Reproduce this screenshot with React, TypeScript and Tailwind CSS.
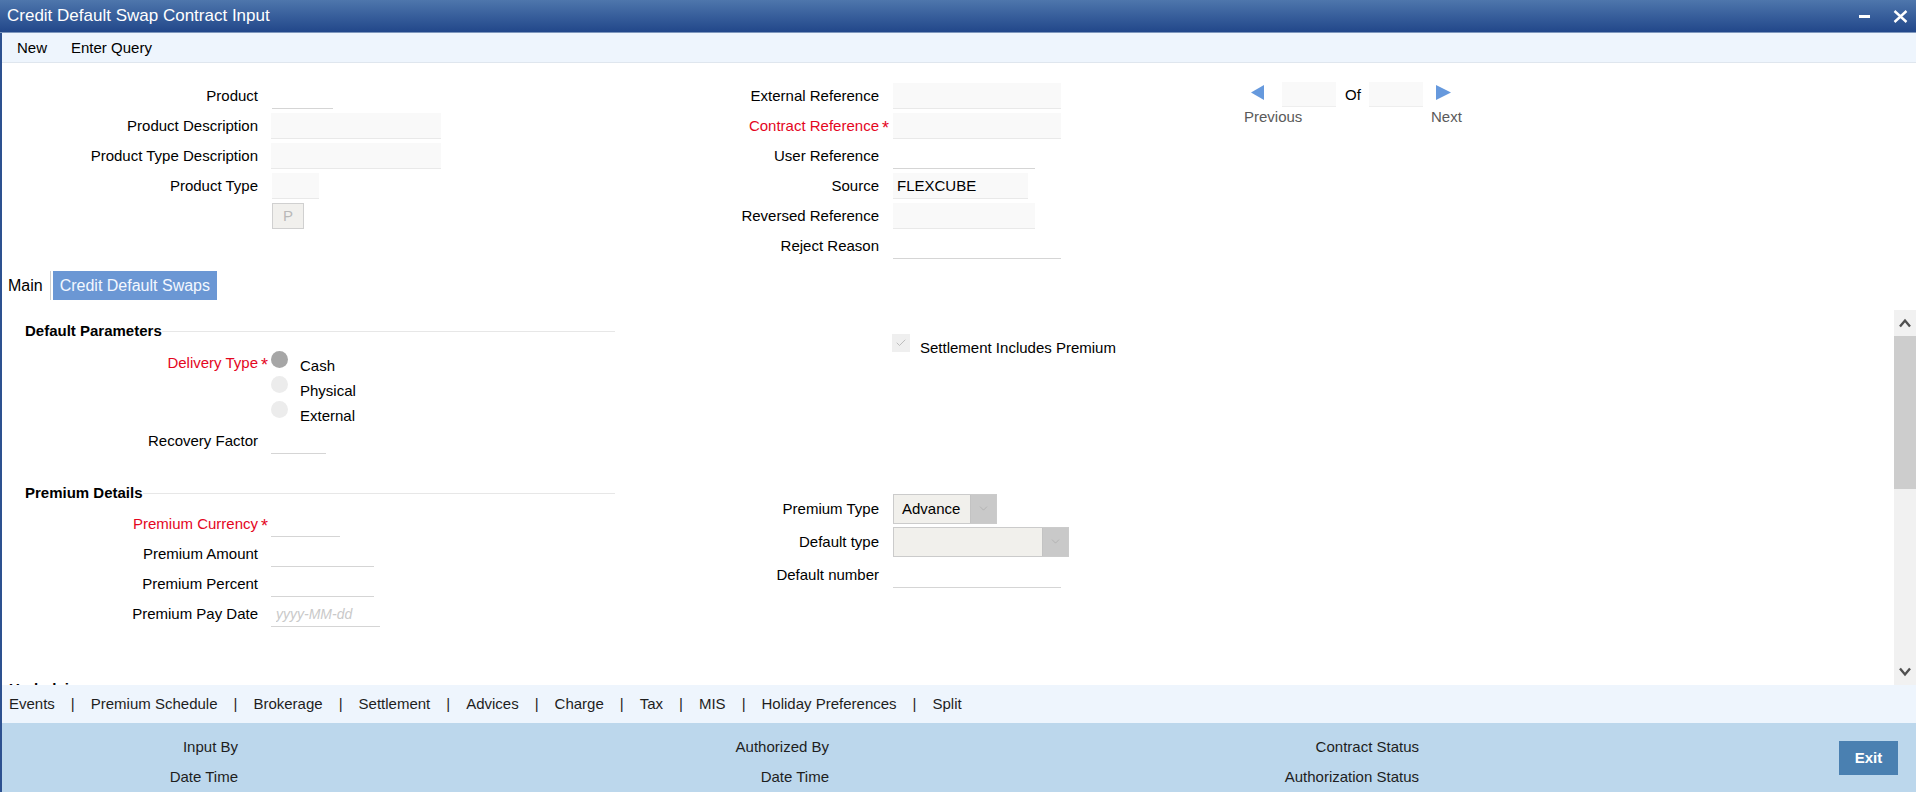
import { Fragment, type ReactNode } from "react";
import { Check, ChevronDown } from "lucide-react";

type RowProps = {
  label?: string;
  required?: boolean;
  labelClass: string;
  gapClass: string;
  heightClass?: string;
  children?: ReactNode;
};

function Row({ label, required, labelClass, gapClass, heightClass = "h-[30px]", children }: RowProps) {
  return (
    <div className={`flex items-center ${heightClass}`}>
      <span className={`${labelClass} shrink-0 text-right ${required ? "text-[#e4061e]" : "text-black"}`}>{label}</span>
      <span className={`${gapClass} shrink-0 text-[#e4061e]`}>
        {required ? <span className="inline-block pl-[3px] pt-[4px] text-[18px] leading-[18px]">*</span> : null}
      </span>
      {children}
    </div>
  );
}

function LineInput({ className, placeholder }: { className: string; placeholder?: string }) {
  return (
    <input
      readOnly
      placeholder={placeholder}
      className={`h-[26px] border-b border-[#d5d5d5] bg-transparent px-[5px] outline-none placeholder:text-[14px] placeholder:italic placeholder:text-[#c9c9c9] ${className}`}
    />
  );
}

function BoxInput({ className, value }: { className: string; value?: string }) {
  return (
    <input
      readOnly
      defaultValue={value}
      className={`h-[26px] border-b border-[#e9e9e9] bg-[#f9f9f9] px-[4px] outline-none ${className}`}
    />
  );
}

function Select({ value, widthClass }: { value?: string; widthClass: string }) {
  return (
    <div className={`flex h-[30px] ${widthClass} border border-[#cbcbcb] bg-[#f1f0ec]`}>
      <span className="flex-1 pl-[8px] leading-[28px]">{value}</span>
      <span className="flex w-[26px] items-center justify-center border-l border-[#c3c3c3] bg-[#c9c9c9]">
        <ChevronDown size={13} strokeWidth={1} color="#a0a0a0" />
      </span>
    </div>
  );
}

function SectionHeading({ title }: { title: string }) {
  return (
    <div className="flex h-[18px] items-center pl-[23px]">
      <span className="font-bold">{title}</span>
      <span className="h-px flex-1 bg-[#e7e7e7]" />
    </div>
  );
}

const L = { labelClass: "w-[256px]", gapClass: "w-[13px]" };
const R = { labelClass: "w-[264px]", gapClass: "w-[14px]" };

const links = [
  "Events",
  "Premium Schedule",
  "Brokerage",
  "Settlement",
  "Advices",
  "Charge",
  "Tax",
  "MIS",
  "Holiday Preferences",
  "Split",
];

function Navigator() {
  return (
    <div className="pl-[4px]">
      <div className="flex h-[27px] items-center pl-[7px]">
        <svg className="self-start mt-[4px]" width="13" height="15" viewBox="0 0 13 15">
          <polygon points="13,0 13,15 0,7.5" fill="#6699dd" />
        </svg>
        <input readOnly className="ml-[18px] h-[25px] w-[54px] border-b border-[#eeeeee] bg-[#f9f9f9] outline-none" />
        <span className="ml-[9px]">Of</span>
        <input readOnly className="ml-[8px] h-[25px] w-[54px] border-b border-[#eeeeee] bg-[#f9f9f9] outline-none" />
        <svg className="ml-[13px] self-start mt-[4px]" width="15" height="15" viewBox="0 0 15 15">
          <polygon points="0,0 15,7.5 0,15" fill="#6699dd" />
        </svg>
      </div>
      <div className="flex text-[#5a5a5a]">
        <span className="w-[187px]">Previous</span>
        <span>Next</span>
      </div>
    </div>
  );
}

function Radio({ label, checked }: { label: string; checked?: boolean }) {
  return (
    <div className="flex h-[25px] items-start">
      <span className={`h-[17px] w-[17px] rounded-full ${checked ? "bg-[#a6a6a6]" : "bg-[#ececec]"}`} />
      <span className="ml-[12px] mt-[6px]">{label}</span>
    </div>
  );
}

function Scrollbar() {
  return (
    <div className="flex w-[22px] shrink-0 flex-col bg-[#f1f1f1]">
      <div className="flex h-[26px] items-center justify-center">
        <svg width="12" height="10" viewBox="0 0 12 10">
          <polyline points="1,8.5 6,2.5 11,8.5" fill="none" stroke="#505050" strokeWidth="2.4" />
        </svg>
      </div>
      <div className="h-[153px] bg-[#cdcdcd]" />
      <div className="flex-1" />
      <div className="flex h-[26px] items-center justify-center">
        <svg width="12" height="10" viewBox="0 0 12 10">
          <polyline points="1,1.5 6,7.5 11,1.5" fill="none" stroke="#505050" strokeWidth="2.4" />
        </svg>
      </div>
    </div>
  );
}

export default function App() {
  return (
    <div className="flex h-screen w-full flex-col overflow-hidden bg-white font-['Liberation_Sans',Arial,sans-serif] text-[15px] leading-[18px] text-black">
      <div className="flex h-[33px] shrink-0 items-center border-b border-[#7e97bd] bg-linear-to-b from-[#4e76ac] to-[#22478a] pl-[7px] pr-[8px] text-white">
        <span className="text-[17px] leading-[20px]">Credit Default Swap Contract Input</span>
        <span className="ml-auto h-[3px] w-[11px] bg-white" />
        <svg className="ml-[23px]" width="15" height="13" viewBox="0 0 15 13">
          <path d="M1.5 1 L13.5 12 M13.5 1 L1.5 12" stroke="white" strokeWidth="2.4" />
        </svg>
      </div>

      <div className="flex min-h-0 flex-1 flex-col border-l-2 border-[#2d5190]">
        <div className="flex h-[30px] shrink-0 items-center gap-[24px] border-b border-[#dfe6ee] bg-[#eef5fd] pl-[15px]">
          <span>New</span>
          <span>Enter Query</span>
        </div>

        {/* contract header */}
        <div className="flex shrink-0 pt-[18px]">
          <div className="w-[613px] shrink-0">
            <Row label="Product" {...L}>
              <LineInput className="ml-px w-[61px]" />
            </Row>
            <Row label="Product Description" {...L}>
              <BoxInput className="w-[170px]" />
            </Row>
            <Row label="Product Type Description" {...L}>
              <BoxInput className="w-[170px]" />
            </Row>
            <Row label="Product Type" {...L}>
              <BoxInput className="ml-px w-[47px]" />
            </Row>
            <Row {...L}>
              <button className="ml-px h-[26px] w-[32px] border border-[#d0d0d0] bg-[#f1f0ed] text-[#b8b8b8]">P</button>
            </Row>
          </div>
          <div className="w-[625px] shrink-0">
            <Row label="External Reference" {...R}>
              <BoxInput className="w-[168px]" />
            </Row>
            <Row label="Contract Reference" required {...R}>
              <BoxInput className="w-[168px]" />
            </Row>
            <Row label="User Reference" {...R}>
              <LineInput className="w-[142px]" />
            </Row>
            <Row label="Source" {...R}>
              <BoxInput className="w-[135px]" value="FLEXCUBE" />
            </Row>
            <Row label="Reversed Reference" {...R}>
              <BoxInput className="w-[142px]" />
            </Row>
            <Row label="Reject Reason" {...R}>
              <LineInput className="w-[168px]" />
            </Row>
          </div>
          <Navigator />
        </div>

        <div className="mt-[10px] flex h-[29px] shrink-0 items-stretch text-[16px]">
          <span className="flex items-center border-r border-[#cfcfcf] pl-[6px] pr-[7px]">Main</span>
          <span className="ml-[2px] flex items-center bg-[#6b97d4] px-[7px] text-[#f3f7ff]">Credit Default Swaps</span>
        </div>

        <div className="mt-[10px] flex min-h-0 flex-1 overflow-hidden">
          <div className="min-w-0 flex-1 overflow-hidden pt-[12px]">
            <div className="flex">
              <div className="w-[613px] shrink-0">
                <SectionHeading title="Default Parameters" />
                <div className="mt-[11px] flex items-start">
                  <span className="w-[256px] shrink-0 pt-[3px] text-right text-[#e4061e]">Delivery Type</span>
                  <span className="w-[13px] shrink-0 pl-[3px] pt-[5px] text-[18px] leading-[18px] text-[#e4061e]">*</span>
                  <div className="flex flex-col">
                    <Radio label="Cash" checked />
                    <Radio label="Physical" />
                    <Radio label="External" />
                  </div>
                </div>
                <Row label="Recovery Factor" {...L}>
                  <LineInput className="w-[55px]" />
                </Row>
              </div>
              <div className="flex-1 pt-[12px]">
                <div className="flex items-start">
                  <span className="w-[277px] shrink-0" />
                  <span className="flex h-[18px] w-[18px] items-center justify-center bg-[#efefef]">
                    <Check size={12} strokeWidth={1.6} color="#b0b0b0" />
                  </span>
                  <span className="ml-[10px] mt-[5px]">Settlement Includes Premium</span>
                </div>
              </div>
            </div>

            <div className="mt-[28px] flex">
              <div className="w-[613px] shrink-0">
                <SectionHeading title="Premium Details" />
                <div className="mt-[7px]">
                  <Row label="Premium Currency" required {...L}>
                    <LineInput className="w-[69px]" />
                  </Row>
                  <Row label="Premium Amount" {...L}>
                    <LineInput className="w-[103px]" />
                  </Row>
                  <Row label="Premium Percent" {...L}>
                    <LineInput className="w-[103px]" />
                  </Row>
                  <Row label="Premium Pay Date" {...L}>
                    <LineInput className="w-[109px]" placeholder="yyyy-MM-dd" />
                  </Row>
                </div>
              </div>
              <div className="flex-1 pt-[8px]">
                <Row label="Premium Type" heightClass="h-[33px]" {...R}>
                  <Select value="Advance" widthClass="w-[104px]" />
                </Row>
                <Row label="Default type" heightClass="h-[33px]" {...R}>
                  <Select widthClass="w-[176px]" />
                </Row>
                <Row label="Default number" heightClass="h-[33px]" {...R}>
                  <LineInput className="w-[168px]" />
                </Row>
              </div>
            </div>

            <div className="mt-[51px] w-[613px]">
              <div className="flex h-[18px] items-center pl-[7px]">
                <span className="font-bold">Underlying</span>
              </div>
            </div>
          </div>
          <Scrollbar />
        </div>

        <div className="flex h-[38px] shrink-0 items-center gap-4 bg-[#eef5fd] pl-[7px] text-[#1e1e1e]">
          {links.map((link, i) => (
            <Fragment key={link}>
              {i > 0 ? <span>|</span> : null}
              <span>{link}</span>
            </Fragment>
          ))}
        </div>

        <div className="flex h-[69px] shrink-0 bg-[#bcd7ec] text-[#1e1e1e]">
          <div className="flex w-[236px] flex-col pt-[9px] text-right">
            <span className="leading-[30px]">Input By</span>
            <span className="leading-[30px]">Date Time</span>
          </div>
          <div className="ml-[391px] flex w-[200px] flex-col pt-[9px] text-right">
            <span className="leading-[30px]">Authorized By</span>
            <span className="leading-[30px]">Date Time</span>
          </div>
          <div className="ml-[390px] flex w-[200px] flex-col pt-[9px] text-right">
            <span className="leading-[30px]">Contract Status</span>
            <span className="leading-[30px]">Authorization Status</span>
          </div>
          <button className="ml-auto mr-[18px] h-[34px] w-[59px] self-center bg-[#4a80b1] font-bold text-white">Exit</button>
        </div>
      </div>
    </div>
  );
}
